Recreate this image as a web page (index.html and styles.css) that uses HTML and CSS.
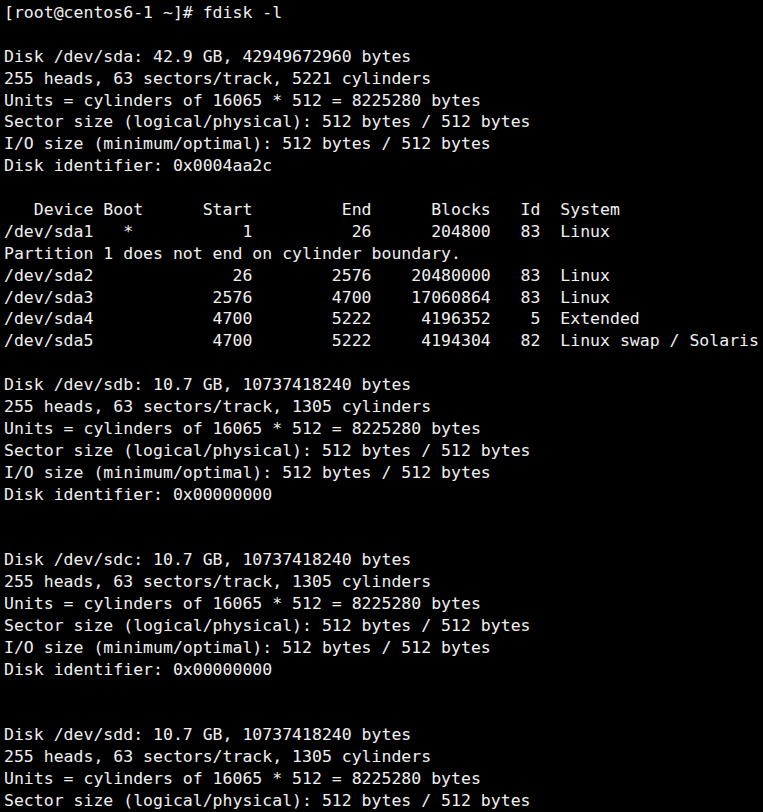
FILE: index.html
```html
<!DOCTYPE html>
<html lang="en">
<head>
  <meta charset="UTF-8">
  <meta name="viewport" content="width=device-width, initial-scale=1.0">
  <title>fdisk -l</title>
  <link rel="stylesheet" href="styles.css">
</head>
<body>
  <pre class="terminal">[root@centos6-1 ~]# fdisk -l

Disk /dev/sda: 42.9 GB, 42949672960 bytes
255 heads, 63 sectors/track, 5221 cylinders
Units = cylinders of 16065 * 512 = 8225280 bytes
Sector size (logical/physical): 512 bytes / 512 bytes
I/O size (minimum/optimal): 512 bytes / 512 bytes
Disk identifier: 0x0004aa2c

   Device Boot      Start         End      Blocks   Id  System
/dev/sda1   *           1          26      204800   83  Linux
Partition 1 does not end on cylinder boundary.
/dev/sda2              26        2576    20480000   83  Linux
/dev/sda3            2576        4700    17060864   83  Linux
/dev/sda4            4700        5222     4196352    5  Extended
/dev/sda5            4700        5222     4194304   82  Linux swap / Solaris

Disk /dev/sdb: 10.7 GB, 10737418240 bytes
255 heads, 63 sectors/track, 1305 cylinders
Units = cylinders of 16065 * 512 = 8225280 bytes
Sector size (logical/physical): 512 bytes / 512 bytes
I/O size (minimum/optimal): 512 bytes / 512 bytes
Disk identifier: 0x00000000


Disk /dev/sdc: 10.7 GB, 10737418240 bytes
255 heads, 63 sectors/track, 1305 cylinders
Units = cylinders of 16065 * 512 = 8225280 bytes
Sector size (logical/physical): 512 bytes / 512 bytes
I/O size (minimum/optimal): 512 bytes / 512 bytes
Disk identifier: 0x00000000


Disk /dev/sdd: 10.7 GB, 10737418240 bytes
255 heads, 63 sectors/track, 1305 cylinders
Units = cylinders of 16065 * 512 = 8225280 bytes
Sector size (logical/physical): 512 bytes / 512 bytes</pre>
</body>
</html>
```

FILE: styles.css
```css
* {
  margin: 0;
  padding: 0;
  box-sizing: border-box;
}

html, body {
  background-color: #000;
  height: 100%;
  overflow: hidden;
}

body {
  padding: 2px 0 0 4px;
}

.terminal {
  font-family: "DejaVu Sans Mono", "Liberation Mono", monospace;
  font-size: 16.5px;
  line-height: 21.89px;
  color: #f0f0f0;
  white-space: pre;
}
```
